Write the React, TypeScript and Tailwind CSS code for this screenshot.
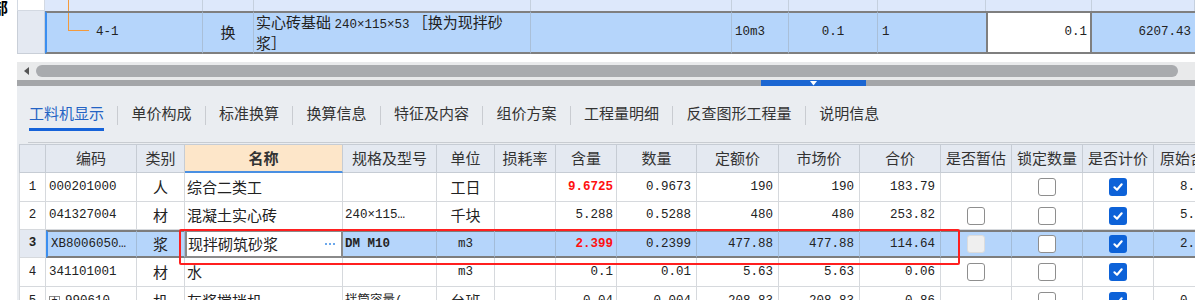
import React from "react";

const cjk = "font-['Noto_Sans_CJK_SC',sans-serif]";
const mono = "font-['Liberation_Mono','Noto_Sans_CJK_SC',monospace] text-[12.5px]";

const TOP_COLS = "grid grid-cols-[28px_158px_51px_277px_201px_57px_89px_108px_106px_103px]";
const COLS = "grid grid-cols-[27px_91px_48px_158px_94px_58px_61px_61px_80px_82px_81px_81px_71px_71px_71px_86px]";

const tabs = ["工料机显示", "单价构成", "标准换算", "换算信息", "特征及内容", "组价方案", "工程量明细", "反查图形工程量", "说明信息"];
const heads = ["", "编码", "类别", "名称", "规格及型号", "单位", "损耗率", "含量", "数量", "定额价", "市场价", "合价", "是否暂估", "锁定数量", "是否计价", "原始含量"];

type Row = {
  n: string;
  code: string;
  kind: string;
  name: string;
  spec: string;
  unit: string;
  qty: string;
  num: string;
  quota: string;
  market: string;
  total: string;
  est: "none" | "off" | "dis";
  orig: string;
  h: string;
};

const rows: Row[] = [
  { n: "1", code: "000201000", kind: "人", name: "综合二类工", spec: "", unit: "工日", qty: "9.6725", num: "0.9673", quota: "190", market: "190", total: "183.79", est: "none", orig: "8.7023", h: "h-[29px]" },
  { n: "2", code: "041327004", kind: "材", name: "混凝土实心砖", spec: "240×115…", unit: "千块", qty: "5.288", num: "0.5288", quota: "480", market: "480", total: "253.82", est: "off", orig: "5.288", h: "h-[28px]" },
  { n: "3", code: "XB8006050…", kind: "浆", name: "现拌砌筑砂浆", spec: "DM M10", unit: "m3", qty: "2.399", num: "0.2399", quota: "477.88", market: "477.88", total: "114.64", est: "dis", orig: "2.399", h: "h-[28px]" },
  { n: "4", code: "341101001", kind: "材", name: "水", spec: "", unit: "m3", qty: "0.1", num: "0.01", quota: "5.63", market: "5.63", total: "0.06", est: "off", orig: "", h: "h-[29px]" },
  { n: "5", code: "990610…", kind: "机", name: "灰浆搅拌机", spec: "拌筒容量(…", unit: "台班", qty: "0.04", num: "0.004", quota: "208.83", market: "208.83", total: "0.86", est: "none", orig: "0.04", h: "h-[29px]" },
];

function Box({ on, dis }: { on?: boolean; dis?: boolean }) {
  if (on) {
    return (
      <span className="flex h-[18px] w-[18px] items-center justify-center rounded-[3px] bg-[#0d62d8]">
        <svg width="12" height="12" viewBox="0 0 12 12">
          <path d="M2.4 6.3 L5 8.8 L9.7 3.3" stroke="white" strokeWidth="2.1" fill="none" strokeLinecap="round" strokeLinejoin="round" />
        </svg>
      </span>
    );
  }
  if (dis) return <span className="h-[18px] w-[18px] rounded-[3px] border border-[#dcdcdc] bg-[#efefef]" />;
  return <span className="h-[18px] w-[18px] rounded-[3px] border border-[#8e8e8e] bg-white" />;
}

function TableRow({ r }: { r: Row }) {
  const sel = r.n === "3";
  const line = sel
    ? "border-r border-r-[#a3bcd8] border-y-2 border-y-[#7d7d7d] bg-[#b5d5fb]"
    : "border-r border-b border-[#d6d9dd] bg-white";
  const cell = "flex items-center overflow-hidden whitespace-nowrap text-[#222] ";
  const num = cell + line + " justify-end pr-[5px] " + mono;
  const red = r.n === "1" || r.n === "3";

  return (
    <div className={COLS + " " + r.h}>
      <div className={cell + "justify-center border-x border-b border-[#d6d9dd] " + mono + (sel ? " bg-[#e4e9f2] font-bold" : " bg-white")}>
        {r.n}
      </div>
      <div className={cell + line + " pl-[3px] " + mono + (sel ? " border-l-2 border-l-[#3b8ef0]" : "")}>
        {r.n === "5" && (
          <span className="mr-[5px] flex h-[11px] w-[11px] items-center justify-center border border-[#8a8a8a] text-[10px] leading-none">+</span>
        )}
        {r.code}
      </div>
      <div className={cell + line + " justify-center text-[15px] " + cjk}>{r.kind}</div>
      {sel ? (
        <div className={cell + "border-2 border-[#8a8a8a] bg-white pl-[1px] text-[15px] " + cjk}>
          <span>{r.name}</span>
          <span className="ml-auto mr-[6px] flex gap-[2px]">
            <span className="h-[2px] w-[2px] rounded-full bg-[#3a8be6]" />
            <span className="h-[2px] w-[2px] rounded-full bg-[#3a8be6]" />
            <span className="h-[2px] w-[2px] rounded-full bg-[#3a8be6]" />
          </span>
        </div>
      ) : (
        <div className={cell + line + " pl-[2px] text-[15px] " + cjk}>{r.name}</div>
      )}
      <div className={cell + line + " pl-[2px] " + mono + (sel ? " font-bold" : "")}>{r.spec}</div>
      <div className={cell + line + " justify-center " + (r.unit === "m3" ? mono : "text-[15px] " + cjk)}>{r.unit}</div>
      <div className={cell + line} />
      <div
        className={
          cell +
          line +
          " justify-end pr-[3px] " +
          mono +
          (red ? " font-bold text-[#ff1010]" : "") +
          (r.n === "1" ? " bg-[#dcf5f8]" : "") +
          (sel ? " bg-[#a4cdf7]" : "")
        }
      >
        {r.qty}
      </div>
      <div className={num}>{r.num}</div>
      <div className={num}>{r.quota}</div>
      <div className={num}>{r.market}</div>
      <div className={num}>{r.total}</div>
      <div className={cell + line + " justify-center"}>
        {r.est === "off" && <Box />}
        {r.est === "dis" && <Box dis />}
      </div>
      <div className={cell + line + " justify-center"}>
        <Box />
      </div>
      <div className={cell + line + " justify-center"}>
        <Box on />
      </div>
      <div className={cell + line + " pl-[26px] " + mono + (sel ? "" : " bg-[#fffaf3]")}>{r.orig}</div>
    </div>
  );
}

export default function App() {
  return (
    <div className="relative flex h-[300px] w-[1195px] overflow-hidden bg-white">
      {/* left strip with the cut-off tree label */}
      <div className="w-[17px] shrink-0 overflow-hidden">
        <div className={"-ml-[8px] -mt-[3px] text-[16px] font-bold leading-[20px] text-black " + cjk}>部</div>
      </div>

      <div className="w-[1178px] shrink-0">
        {/* upper grid */}
        <div className={TOP_COLS + " h-[11px]"}>
          <div className="border-x border-b border-[#d3d9e2] bg-white" />
          <div className="border-r border-[#c5d0de] bg-[#dde8fb]">
            <div className="ml-[23px] h-full w-[1px] bg-[#f39a3c]" />
          </div>
          {[0, 1, 2, 3, 4, 5, 6, 7].map((i) => (
            <div key={i} className="border-r border-[#c5d0de] bg-[#dde8fb]" />
          ))}
        </div>
        <div className={TOP_COLS + " h-[41px] text-[#222]"}>
          <div className="border-x border-b border-[#c9cfd8] bg-[#e4e9f2]" />
          <div className="flex items-center border-l-2 border-r border-y-2 border-l-[#3b8ef0] border-r-[#a9bfd8] border-y-[#7f7f7f] bg-[#b5d5fb]">
            <div className="ml-[21px] h-[18px] w-[21px] self-start border-b border-l border-[#f39a3c]" />
            <span className={"ml-[7px] " + mono}>4-1</span>
          </div>
          <div className={"flex items-center justify-center border-r border-y-2 border-r-[#a9bfd8] border-y-[#7f7f7f] bg-[#b5d5fb] text-[15px] " + cjk}>
            换
          </div>
          <div className={"flex flex-col justify-center border-r border-y-2 border-r-[#a9bfd8] border-y-[#7f7f7f] bg-[#b5d5fb] pl-[2px] text-[15px] leading-[18px] whitespace-nowrap " + cjk}>
            <div>
              实心砖基础 <span className={mono}>240×115×53</span> ［换为现拌砂
            </div>
            <div>浆］</div>
          </div>
          <div className="border-r border-y-2 border-r-[#a9bfd8] border-y-[#7f7f7f] bg-[#b5d5fb]" />
          <div className={"flex items-center border-r border-y-2 border-r-[#a9bfd8] border-y-[#7f7f7f] bg-[#b5d5fb] pl-[3px] " + mono}>10m3</div>
          <div className={"flex items-center justify-center border-r border-y-2 border-r-[#a9bfd8] border-y-[#7f7f7f] bg-[#b5d5fb] " + mono}>0.1</div>
          <div className={"flex items-center border-y-2 border-y-[#7f7f7f] bg-[#b5d5fb] pl-[4px] " + mono}>1</div>
          <div className={"flex items-center justify-end border-2 border-[#7f7f7f] bg-white pr-[3px] " + mono}>0.1</div>
          <div className={"flex items-center justify-end border-y-2 border-y-[#7f7f7f] bg-[#b5d5fb] pr-[4px] " + mono}>6207.43</div>
        </div>

        {/* gap + horizontal scrollbar */}
        <div className="h-[10px] bg-white" />
        <div className="flex h-[18px] items-center bg-[#e9eaeb]">
          <svg width="5" height="8" viewBox="0 0 5 8" className="ml-[7px]">
            <path d="M5 0 L0 4 L5 8 Z" fill="#555" />
          </svg>
          <div className="ml-[7px] h-[12px] w-[1142px] rounded-full bg-[#a9abae]" />
        </div>

        {/* splitter */}
        <div className="flex h-[6px] bg-[#a4a6a9]">
          <div className="ml-[744px] flex h-full w-[105px] justify-center bg-[#1b66d2]">
            <svg width="7" height="5" viewBox="0 0 7 5" className="mt-[1px]">
              <path d="M0 0 L7 0 L3.5 4.5 Z" fill="#ffffff" />
            </svg>
          </div>
        </div>

        {/* tabs */}
        <div className="h-[214px] bg-[#eaedf1]">
          <div className={"flex h-[56px] items-start pl-[12px] pt-[17px] text-[15px] leading-[20px] " + cjk}>
            {tabs.map((t, i) => (
              <React.Fragment key={t}>
                {i > 0 && <div className="mx-[13.25px] mt-[3px] h-[19px] w-px bg-[#c9ccd1]" />}
                <div className="flex flex-col">
                  <span className={i === 0 ? "text-[#2463c4]" : "text-[#333]"}>{t}</span>
                  {i === 0 && <div className="mt-[5px] h-[3px] bg-[#1663d9]" />}
                </div>
              </React.Fragment>
            ))}
          </div>
          <div className="ml-[11px] h-px bg-[#c8ccd1]" />
          <div className="h-px" />

          {/* material table */}
          <div className="ml-[2px]">
            <div className={COLS + " h-[29px]"}>
              {heads.map((h, i) => (
                <div
                  key={i}
                  className={
                    "flex items-center overflow-hidden whitespace-nowrap border-t border-r border-b text-[15px] text-[#333] " +
                    cjk +
                    (i === 0 ? " border-l" : "") +
                    (i === 3
                      ? " justify-center border-t-[#c6ccd4] border-r-[#c6ccd4] border-b-2 border-b-[#4a90e2] bg-[#fde6c9] font-bold"
                      : " border-[#c6ccd4] bg-[#e4e9f1]") +
                    (i === 15 ? " pl-[6px]" : i === 3 ? "" : " justify-center")
                  }
                >
                  {h}
                </div>
              ))}
            </div>
            {rows.map((r) => (
              <TableRow key={r.n} r={r} />
            ))}
          </div>
        </div>
      </div>

      {/* red annotation box */}
      <div className="pointer-events-none absolute left-[179px] top-[229px] h-[36px] w-[781px] rounded-[2px] border-2 border-[#ff1f1f]" />
    </div>
  );
}
